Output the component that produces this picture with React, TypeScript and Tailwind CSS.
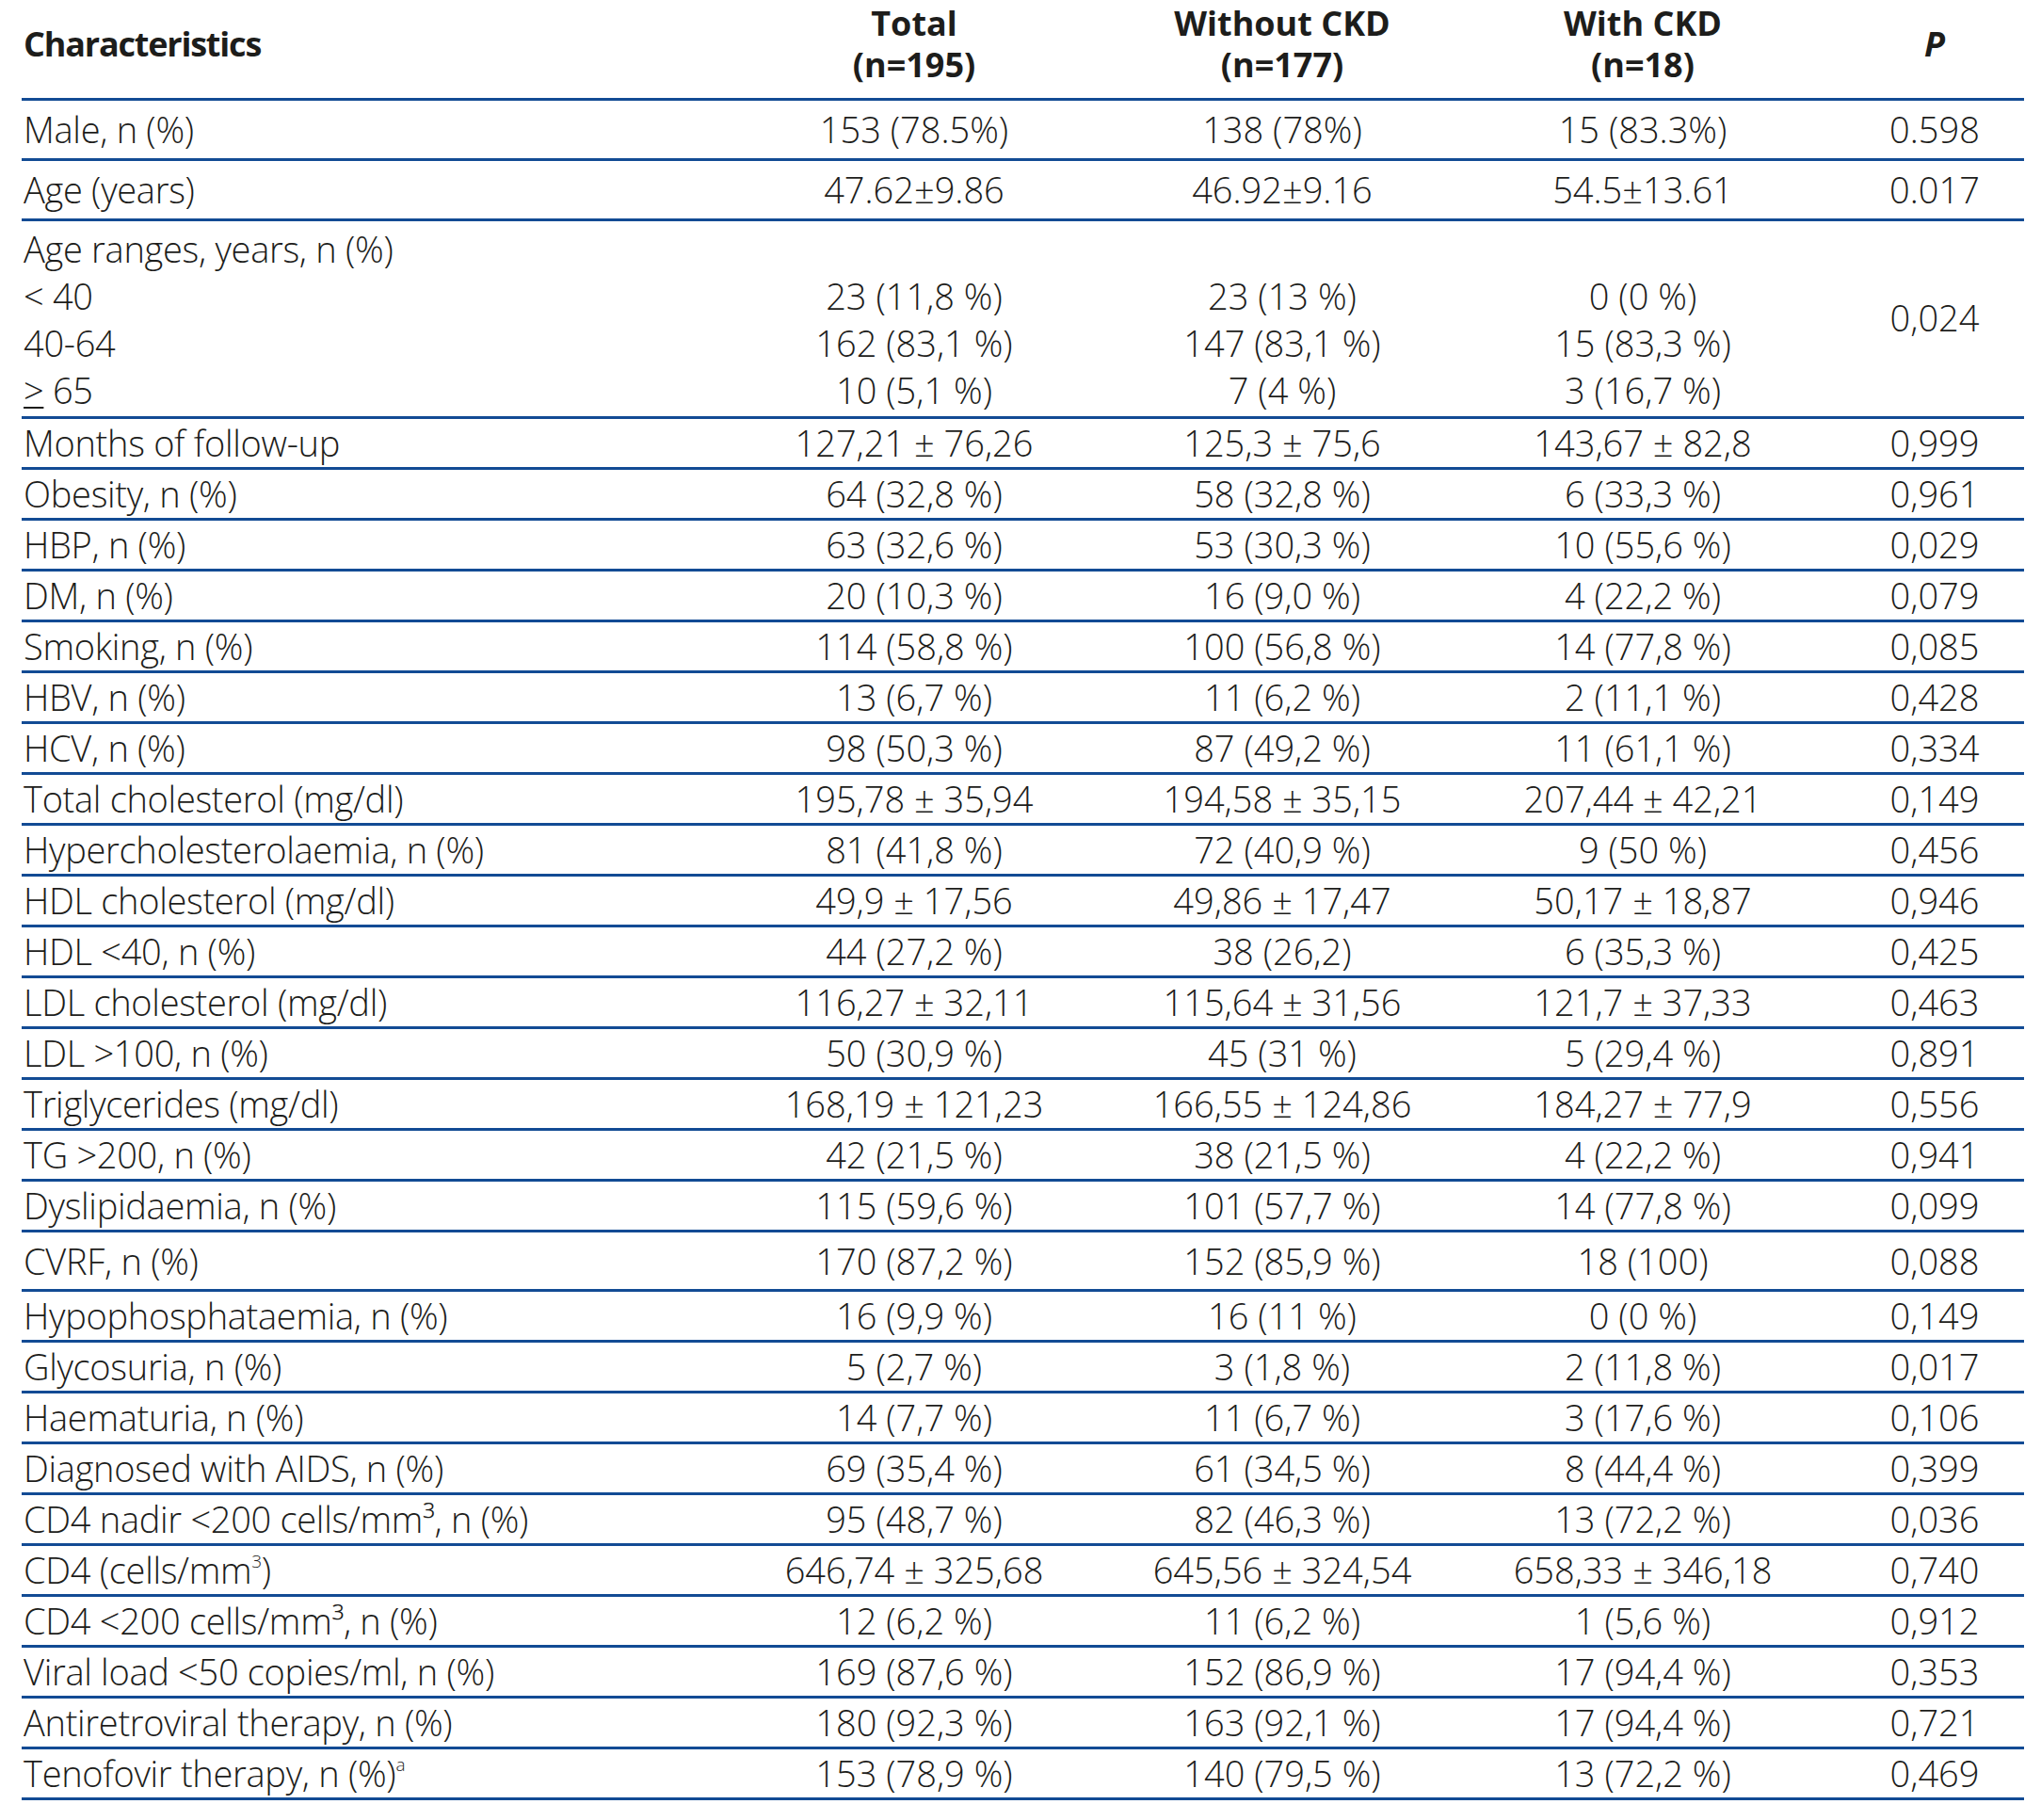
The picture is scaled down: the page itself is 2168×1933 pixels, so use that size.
import React from 'react';

type Row = { label: React.ReactNode; total: string; without: string; withCkd: string; p: string; tall?: boolean };

const ROWS: Row[] = [
  { label: 'Months of follow-up', total: '127,21 ± 76,26', without: '125,3 ± 75,6', withCkd: '143,67 ± 82,8', p: '0,999' },
  { label: 'Obesity, n (%)', total: '64 (32,8 %)', without: '58 (32,8 %)', withCkd: '6 (33,3 %)', p: '0,961' },
  { label: 'HBP, n (%)', total: '63 (32,6 %)', without: '53 (30,3 %)', withCkd: '10 (55,6 %)', p: '0,029' },
  { label: 'DM, n (%)', total: '20 (10,3 %)', without: '16 (9,0 %)', withCkd: '4 (22,2 %)', p: '0,079' },
  { label: 'Smoking, n (%)', total: '114 (58,8 %)', without: '100 (56,8 %)', withCkd: '14 (77,8 %)', p: '0,085' },
  { label: 'HBV, n (%)', total: '13 (6,7 %)', without: '11 (6,2 %)', withCkd: '2 (11,1 %)', p: '0,428' },
  { label: 'HCV, n (%)', total: '98 (50,3 %)', without: '87 (49,2 %)', withCkd: '11 (61,1 %)', p: '0,334' },
  { label: 'Total cholesterol (mg/dl)', total: '195,78 ± 35,94', without: '194,58 ± 35,15', withCkd: '207,44 ± 42,21', p: '0,149' },
  { label: 'Hypercholesterolaemia, n (%)', total: '81 (41,8 %)', without: '72 (40,9 %)', withCkd: '9 (50 %)', p: '0,456' },
  { label: 'HDL cholesterol (mg/dl)', total: '49,9 ± 17,56', without: '49,86 ± 17,47', withCkd: '50,17 ± 18,87', p: '0,946' },
  { label: 'HDL <40, n (%)', total: '44 (27,2 %)', without: '38 (26,2)', withCkd: '6 (35,3 %)', p: '0,425' },
  { label: 'LDL cholesterol (mg/dl)', total: '116,27 ± 32,11', without: '115,64 ± 31,56', withCkd: '121,7 ± 37,33', p: '0,463' },
  { label: 'LDL >100, n (%)', total: '50 (30,9 %)', without: '45 (31 %)', withCkd: '5 (29,4 %)', p: '0,891' },
  { label: 'Triglycerides (mg/dl)', total: '168,19 ± 121,23', without: '166,55 ± 124,86', withCkd: '184,27 ± 77,9', p: '0,556' },
  { label: 'TG >200, n (%)', total: '42 (21,5 %)', without: '38 (21,5 %)', withCkd: '4 (22,2 %)', p: '0,941' },
  { label: 'Dyslipidaemia, n (%)', total: '115 (59,6 %)', without: '101 (57,7 %)', withCkd: '14 (77,8 %)', p: '0,099' },
  { label: 'CVRF, n (%)', total: '170 (87,2 %)', without: '152 (85,9 %)', withCkd: '18 (100)', p: '0,088', tall: true },
  { label: 'Hypophosphataemia, n (%)', total: '16 (9,9 %)', without: '16 (11 %)', withCkd: '0 (0 %)', p: '0,149' },
  { label: 'Glycosuria, n (%)', total: '5 (2,7 %)', without: '3 (1,8 %)', withCkd: '2 (11,8 %)', p: '0,017' },
  { label: 'Haematuria, n (%)', total: '14 (7,7 %)', without: '11 (6,7 %)', withCkd: '3 (17,6 %)', p: '0,106' },
  { label: 'Diagnosed with AIDS, n (%)', total: '69 (35,4 %)', without: '61 (34,5 %)', withCkd: '8 (44,4 %)', p: '0,399' },
  { label: 'CD4 nadir <200 cells/mm³, n (%)', total: '95 (48,7 %)', without: '82 (46,3 %)', withCkd: '13 (72,2 %)', p: '0,036' },
  {
    label: (
      <>
        CD4 (cells/mm<sup className="text-[50%] -top-[0.9em]">3</sup>)
      </>
    ),
    total: '646,74 ± 325,68',
    without: '645,56 ± 324,54',
    withCkd: '658,33 ± 346,18',
    p: '0,740',
  },
  { label: 'CD4 <200 cells/mm³, n (%)', total: '12 (6,2 %)', without: '11 (6,2 %)', withCkd: '1 (5,6 %)', p: '0,912' },
  { label: 'Viral load <50 copies/ml, n (%)', total: '169 (87,6 %)', without: '152 (86,9 %)', withCkd: '17 (94,4 %)', p: '0,353' },
  { label: 'Antiretroviral therapy, n (%)', total: '180 (92,3 %)', without: '163 (92,1 %)', withCkd: '17 (94,4 %)', p: '0,721' },
  {
    label: (
      <>
        Tenofovir therapy, n (%)<sup className="text-[50%] -top-[0.9em]">a</sup>
      </>
    ),
    total: '153 (78,9 %)',
    without: '140 (79,5 %)',
    withCkd: '13 (72,2 %)',
    p: '0,469',
  },
];

// column widths
const C1 = 'w-[725px] pl-[2px] tracking-[-0.3px]';
const C2 = 'w-[446px] text-center';
const C3 = 'w-[336px] text-center';
const C4 = 'w-[430px] text-center';
const C5 = 'w-[190px] text-center';

const LINE = 'border-b-[3px] border-[#124b94]';

export default function App() {
  return (
    <div className="min-h-screen bg-white text-[#1d1d1b] font-['Open_Sans',sans-serif] font-light text-[38px] whitespace-nowrap">
      <div className="ml-[23px] w-[2127px]">
        {/* header */}
        <div className={`flex items-center h-[107px] pb-[10px] font-bold text-[36px] leading-[44px] ${LINE}`}>
          <div className="w-[725px] pl-[2px] tracking-[-1.2px]">Characteristics</div>
          <div className={C2}>Total<br />(n=195)</div>
          <div className={C3}>Without CKD<br />(n=177)</div>
          <div className={C4}>With CKD<br />(n=18)</div>
          <div className={`${C5} italic`}>P</div>
        </div>

        <div className={`flex items-center h-[64px] ${LINE}`}>
          <div className={C1}>Male, n (%)</div>
          <div className={C2}>153 (78.5%)</div>
          <div className={C3}>138 (78%)</div>
          <div className={C4}>15 (83.3%)</div>
          <div className={C5}>0.598</div>
        </div>
        <div className={`flex items-center h-[64px] ${LINE}`}>
          <div className={C1}>Age (years)</div>
          <div className={C2}>47.62±9.86</div>
          <div className={C3}>46.92±9.16</div>
          <div className={C4}>54.5±13.61</div>
          <div className={C5}>0.017</div>
        </div>

        {/* age ranges */}
        <div className={`flex h-[210px] pt-[4px] leading-[50px] ${LINE}`}>
          <div className={C1}>
            <div>Age ranges, years, n (%)</div>
            <div>&lt; 40</div>
            <div>40-64</div>
            <div>
              <span className="underline underline-offset-[3px] decoration-[2px]">&gt;</span> 65
            </div>
          </div>
          <div className={`${C2} pt-[50px]`}>
            <div>23 (11,8 %)</div>
            <div>162 (83,1 %)</div>
            <div>10 (5,1 %)</div>
          </div>
          <div className={`${C3} pt-[50px]`}>
            <div>23 (13 %)</div>
            <div>147 (83,1 %)</div>
            <div>7 (4 %)</div>
          </div>
          <div className={`${C4} pt-[50px]`}>
            <div>0 (0 %)</div>
            <div>15 (83,3 %)</div>
            <div>3 (16,7 %)</div>
          </div>
          <div className={`${C5} self-center pb-[8px]`}>0,024</div>
        </div>

        {ROWS.map((r, i) => (
          <div key={i} className={`flex items-center ${r.tall ? 'h-[63px]' : 'h-[54px]'} ${LINE}`}>
            <div className={C1}>{r.label}</div>
            <div className={C2}>{r.total}</div>
            <div className={C3}>{r.without}</div>
            <div className={C4}>{r.withCkd}</div>
            <div className={C5}>{r.p}</div>
          </div>
        ))}
      </div>
    </div>
  );
}
